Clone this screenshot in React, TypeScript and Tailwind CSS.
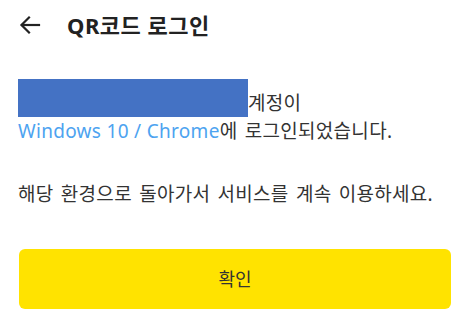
import React from 'react';

const FONT = "font-['Noto_Sans','Noto_Sans_CJK_KR',sans-serif]";

const BackArrow: React.FC = () => (
  <svg width="24" height="24" viewBox="0 0 24 24" fill="none" stroke="#222" strokeWidth="2.2" strokeLinecap="square">
    <path d="M21 12H4" />
    <path d="M11 4.5l-7.5 7.5 7.5 7.5" />
  </svg>
);

export default function App() {
  return (
    <div className={`w-[470px] h-[321px] bg-white text-[#333] ${FONT}`}>
      {/* header */}
      <div className="flex items-center h-[50px] pl-[18px]">
        <BackArrow />
        <h1 className="ml-[25px] text-[22px] font-bold text-[#222] tracking-[0.5px]">QR코드 로그인</h1>
      </div>

      {/* message */}
      <div className="px-[18px] pt-[29px] text-[19px] leading-[28px] tracking-[0.3px]">
        <p>
          <span className="inline-block w-[230px] h-[38px] bg-[#4472c4] align-bottom" />
          계정이
          <br />
          <span className="text-[#4da3f0]">Windows 10 / Chrome</span>
          <span className="[word-spacing:2px]">에 로그인되었습니다.</span>
        </p>
        <p className="mt-[35px] [word-spacing:2px]">해당 환경으로 돌아가서 서비스를 계속 이용하세요.</p>
      </div>

      {/* confirm */}
      <div className="px-[19px] pt-[41px]">
        <button className="w-full h-[60px] rounded-[6px] bg-[#ffe300] text-[18px] text-[#333]">확인</button>
      </div>
    </div>
  );
}
